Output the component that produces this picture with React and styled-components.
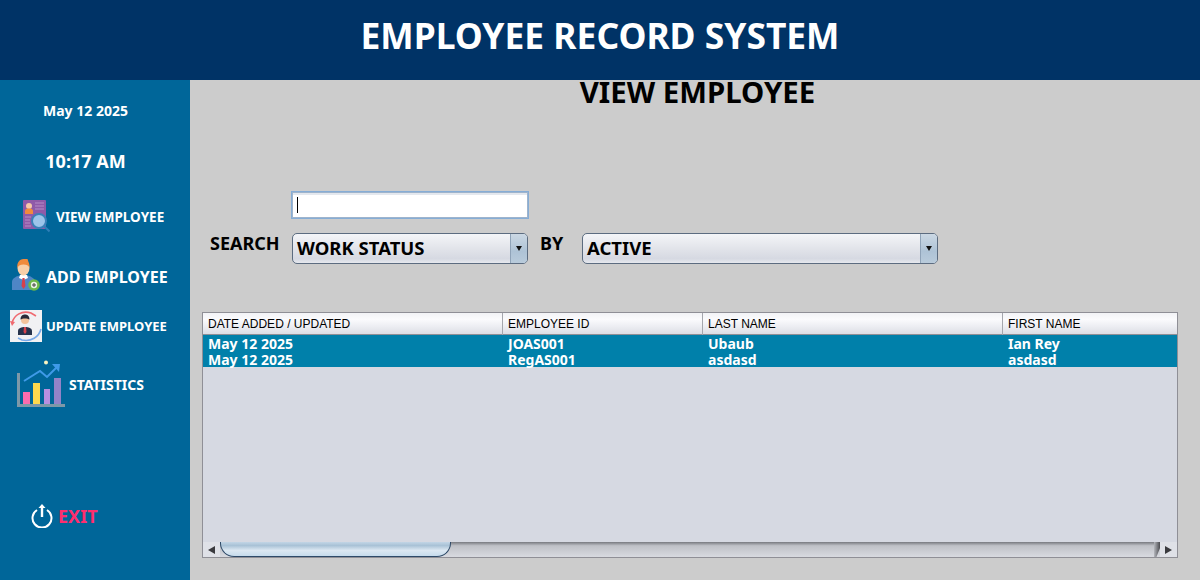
import styled, { createGlobalStyle } from "styled-components";

const GlobalStyle = createGlobalStyle`
  html, body {
    margin: 0;
    padding: 0;
    background: #cccccc;
  }
  body {
    font-family: "Noto Sans", "DejaVu Sans", sans-serif;
  }
`;

const Page = styled.div`
  width: 1200px;
  height: 580px;
  overflow: hidden;
  display: flex;
  flex-direction: column;
`;

const Header = styled.header`
  height: 80px;
  flex: none;
  background: #003366;
  color: #fff;
  display: flex;
  align-items: center;
  justify-content: center;
`;

const AppTitle = styled.h1`
  margin: 0 0 10px;
  font: 700 35.4px "Noto Sans", sans-serif;
`;

const Body = styled.div`
  flex: 1;
  display: flex;
  min-height: 0;
`;

const Sidebar = styled.nav`
  width: 190px;
  flex: none;
  background: #006699;
  color: #fff;
  display: flex;
  flex-direction: column;
`;

const ClockText = styled.div`
  height: ${(p) => p.$height}px;
  margin-top: ${(p) => p.$top}px;
  text-align: center;
  width: 171px;
  font: 700 ${(p) => p.$size}px/${(p) => p.$height}px "Noto Sans", sans-serif;
`;

const NavItem = styled.a`
  display: flex;
  align-items: center;
  height: ${(p) => p.$height}px;
  margin-top: ${(p) => p.$top}px;
  padding-left: ${(p) => p.$indent}px;
  gap: ${(p) => p.$gap}px;
  color: ${(p) => p.$color || "#fff"};
  font: 700 ${(p) => p.$size}px "Noto Sans", sans-serif;
  white-space: nowrap;
  svg {
    flex: none;
    display: block;
  }
`;

const NavLabel = styled.span`
  padding-top: ${(p) => p.$drop || 0}px;
`;

const Main = styled.main`
  flex: 1;
  min-width: 0;
  background: #cccccc;
  display: flex;
  flex-direction: column;
  padding: 0 22px 0 12px;
`;

const ViewTitle = styled.h2`
  margin: 0;
  padding-left: 15px;
  height: 25px;
  text-align: center;
  color: #000;
  font: 700 29.4px/25px "Noto Sans", sans-serif;
`;

const SearchGrid = styled.div`
  margin-top: 87px;
  display: grid;
  grid-template-columns: 90px 236px 54px 356px;
  grid-template-rows: 26px 31px;
  row-gap: 15px;
  align-items: center;
`;

const SearchInput = styled.div`
  grid-column: 2;
  grid-row: 1;
  box-sizing: border-box;
  height: 26px;
  background: #fff;
  border: 1px solid #9fb4cc;
  box-shadow: 0 0 0 1px #86add6, inset 0 2px 0 #e4e8ee;
  display: flex;
  align-items: center;
  padding-left: 4px;
`;

const Caret = styled.span`
  width: 1px;
  height: 16px;
  background: #000;
`;

const FieldLabel = styled.span`
  grid-row: 2;
  grid-column: ${(p) => p.$col};
  padding-left: ${(p) => p.$indent}px;
  margin-top: -12px;
  color: #000;
  font: 700 18px "Noto Sans", sans-serif;
`;

const Combo = styled.div`
  grid-row: 2;
  grid-column: ${(p) => p.$col};
  box-sizing: border-box;
  height: 31px;
  border: 1px solid #5c6c80;
  border-radius: 5px;
  display: flex;
  overflow: hidden;
  background: linear-gradient(#f4f5f8, #e2e4ea 50%, #d6d9e2 85%, #e6e8ee);
`;

const ComboValue = styled.span`
  flex: 1;
  padding-left: 4px;
  color: #000;
  font: 700 18.5px/28px "Noto Sans", sans-serif;
`;

const ComboArrow = styled.span`
  width: 16px;
  border-left: 1px solid #8fa3b8;
  background: linear-gradient(#cbd8e4, #aec3d6 60%, #b9cbdb);
  display: flex;
  align-items: center;
  justify-content: center;
  &::after {
    content: "";
    border-left: 3.5px solid transparent;
    border-right: 3.5px solid transparent;
    border-top: 5px solid #111;
  }
`;

const TablePanel = styled.section`
  margin-top: 48px;
  box-sizing: border-box;
  width: 976px;
  height: 246px;
  border: 1px solid #8f8f96;
  background: #d6d9e2;
  display: flex;
  flex-direction: column;
`;

const Columns = styled.div`
  flex: none;
  display: grid;
  grid-template-columns: 300px 200px 300px 174px;
`;

const HeadRow = styled(Columns)`
  height: 21px;
  border-bottom: 1px solid #8f8f96;
  background: linear-gradient(#f2f3f6, #fbfbfd 30%, #ecedf2 65%, #dcdee5);
`;

const HeadCell = styled.div`
  box-sizing: border-box;
  padding-left: 5px;
  border-right: 1px solid #a4a6ad;
  color: #000;
  font: 12px/22px "Liberation Sans", sans-serif;
  &:last-child {
    border-right: none;
  }
`;

const Rows = styled.div`
  flex: 1;
  min-height: 0;
`;

const RowBlock = styled.div`
  box-sizing: border-box;
  height: 32px;
  padding-top: 1px;
  background: #0080aa;
`;

const DataRow = styled(Columns)`
  height: 16px;
`;

const DataCell = styled.div`
  padding-left: 5px;
  color: #fff;
  font: 700 14px/16px "Noto Sans", sans-serif;
`;

const ScrollBar = styled.div`
  flex: none;
  height: 15px;
  display: flex;
  background: linear-gradient(#77797f, #bfc1c7 25%, #d8dae0);
`;

const ScrollButton = styled.div`
  width: 17px;
  flex: none;
  background: #dfe1e7;
  display: flex;
  align-items: center;
  justify-content: center;
  &::after {
    content: "";
    border-top: 4px solid transparent;
    border-bottom: 4px solid transparent;
    ${(p) => (p.$dir === "left" ? "border-right" : "border-left")}: 7px solid #3a3a3e;
  }
`;

const ScrollThumb = styled.div`
  width: 231px;
  flex: none;
  box-sizing: border-box;
  border: 1px solid #2e4a68;
  border-top: none;
  border-radius: 0 0 14px 14px;
  background: linear-gradient(#c2d5e6, #a9c2d6 25%, #dce8f2 60%, #c6dbec);
`;

const ScrollTrack = styled.div`
  flex: 1;
`;

const ScrollEnd = styled.div`
  width: 6px;
  flex: none;
  background: linear-gradient(90deg, #b4b6bc, #4a4b50);
  clip-path: polygon(0 0, 100% 0, 100% 40%, 40% 100%, 0 100%);
`;

const ViewIcon = () => (
  <svg width="28" height="34" viewBox="0 0 28 34">
    <rect x="1" y="1" width="23" height="29" rx="1" fill="#8f5aa8" />
    <circle cx="7" cy="7" r="3" fill="#f6c8a8" />
    <path d="M3 15v-3c0-2 2-2.500 4-2.500s4 .5 4 2.500v3z" fill="#f08a3c" />
    <path d="M13 4h9M13 7h9M13 10h9M3 18h6M3 21h5M3 24h5M3 27h6" stroke="#b58cc6" strokeWidth="1" />
    <path d="M22 27l5.500 5.500" stroke="#2f7fb8" strokeWidth="2" />
    <circle cx="17" cy="22" r="7" fill="#9cc4ea" stroke="#3a80b8" strokeWidth="2" />
  </svg>
);

const AddIcon = () => (
  <svg width="29" height="32" viewBox="0 0 29 32">
    <path d="M1 31v-8c0-4 5-6 9-7h5c4 1 9 3 9 7v8z" fill="#4f86c6" />
    <path d="M9 16h7l1 3-4.500 2-4.500-2z" fill="#fff" />
    <path d="M11.500 19h2l1 8-2 3-2-3z" fill="#d7404a" />
    <ellipse cx="12.500" cy="9" rx="6" ry="7.500" fill="#f8cfa8" />
    <path d="M6.500 9c-1-5 2-9 6-9h4l1 3c1 2 1 4 1 6-1-3-3-3.500-6-3.500s-5 .5-6 3.500z" fill="#ef8a3c" />
    <circle cx="23" cy="26" r="5.800" fill="#6cb84a" />
    <circle cx="23" cy="26" r="3.200" fill="#e8f2e2" />
    <path d="M21 26h4M23 24v4" stroke="#444" strokeWidth="1" />
  </svg>
);

const UpdateIcon = () => (
  <svg width="32" height="32" viewBox="0 0 32 32">
    <rect width="32" height="32" fill="#f1f1f3" />
    <path d="M2 13C4 5 12 0 21 3l5 3" fill="none" stroke="#ef6a70" strokeWidth="1.600" />
    <path d="M0 11l2 5 3-4z" fill="#ef6a70" />
    <path d="M31 19c-2 8-10 13-19 11l-4-2" fill="none" stroke="#79a9e8" strokeWidth="1.600" />
    <circle cx="15" cy="10" r="4" fill="#f3c39c" />
    <path d="M10.500 9.500c0-4 2.500-5 4.500-5s4.500 1 4.500 5c-2-1.500-7-1.500-9 0z" fill="#2a2a38" />
    <path d="M8 25v-4c0-3 3.500-4 7-4s7 1 7 4v4z" fill="#27324c" />
    <path d="M14 17h2l.5 5-1.500 2-1.500-2z" fill="#d8434c" />
  </svg>
);

const StatsIcon = () => (
  <svg width="49" height="48" viewBox="0 0 49 48">
    <rect x="0" y="13" width="3" height="33" fill="#7d98a8" />
    <rect x="0" y="44" width="48" height="3" fill="#7d98a8" />
    <rect x="6" y="32" width="7" height="12" fill="#fb6cae" />
    <rect x="16" y="23" width="7" height="21" fill="#ffd84d" />
    <rect x="27" y="29" width="6" height="15" fill="#b98fe0" />
    <rect x="37" y="18" width="7" height="26" fill="#9383c8" />
    <path d="M7 21l16-10 7 6 11-11" fill="none" stroke="#3f9ae8" strokeWidth="2" />
    <path d="M35 4h8l-1 8z" fill="#3f9ae8" />
    <circle cx="29" cy="2.500" r="2" fill="#fbf3c0" />
  </svg>
);

const PowerIcon = () => (
  <svg width="22" height="25" viewBox="0 0 22 25" fill="none" stroke="#fff">
    <path d="M6 7a9.500 9.500 0 1 0 10 0" strokeWidth="2" />
    <path d="M11 14V3" strokeWidth="2.400" />
    <path d="M7.500 5L11 1l3.500 4z" fill="#fff" stroke="none" />
  </svg>
);

const headers = ["DATE ADDED / UPDATED", "EMPLOYEE ID", "LAST NAME", "FIRST NAME"];

const records = [
  ["May 12 2025", "JOAS001", "Ubaub", "Ian Rey"],
  ["May 12 2025", "RegAS001", "asdasd", "asdasd"],
];

export default function App() {
  return (
    <Page>
      <GlobalStyle />
      <Header>
        <AppTitle>EMPLOYEE RECORD SYSTEM</AppTitle>
      </Header>
      <Body>
        <Sidebar>
          <ClockText $top={22} $height={18} $size={14}>May 12 2025</ClockText>
          <ClockText $top={31} $height={20} $size={18}>10:17 AM</ClockText>
          <NavItem $top={28} $height={34} $indent={22} $gap={6} $size={13.5}>
            <ViewIcon />
            <NavLabel $drop={2}>VIEW EMPLOYEE</NavLabel>
          </NavItem>
          <NavItem $top={26} $height={32} $indent={11} $gap={6} $size={16}>
            <AddIcon />
            <NavLabel $drop={4}>ADD EMPLOYEE</NavLabel>
          </NavItem>
          <NavItem $top={19} $height={32} $indent={10} $gap={4} $size={13}>
            <UpdateIcon />
            UPDATE EMPLOYEE
          </NavItem>
          <NavItem $top={18} $height={48} $indent={17} $gap={3} $size={14}>
            <StatsIcon />
            <NavLabel $drop={1}>STATISTICS</NavLabel>
          </NavItem>
          <NavItem $top={95} $height={25} $indent={31} $gap={5} $size={18} $color="#ff2e6e">
            <PowerIcon />
            EXIT
          </NavItem>
        </Sidebar>
        <Main>
          <ViewTitle>VIEW EMPLOYEE</ViewTitle>
          <SearchGrid>
            <SearchInput>
              <Caret />
            </SearchInput>
            <FieldLabel $col={1} $indent={8}>SEARCH</FieldLabel>
            <Combo $col={2}>
              <ComboValue>WORK STATUS</ComboValue>
              <ComboArrow />
            </Combo>
            <FieldLabel $col={3} $indent={12}>BY</FieldLabel>
            <Combo $col={4}>
              <ComboValue>ACTIVE</ComboValue>
              <ComboArrow />
            </Combo>
          </SearchGrid>
          <TablePanel>
            <HeadRow>
              {headers.map((h) => (
                <HeadCell key={h}>{h}</HeadCell>
              ))}
            </HeadRow>
            <Rows>
              <RowBlock>
                {records.map((r) => (
                  <DataRow key={r[1]}>
                    {r.map((v, i) => (
                      <DataCell key={i}>{v}</DataCell>
                    ))}
                  </DataRow>
                ))}
              </RowBlock>
            </Rows>
            <ScrollBar>
              <ScrollButton $dir="left" />
              <ScrollThumb />
              <ScrollTrack />
              <ScrollEnd />
              <ScrollButton $dir="right" />
            </ScrollBar>
          </TablePanel>
        </Main>
      </Body>
    </Page>
  );
}
